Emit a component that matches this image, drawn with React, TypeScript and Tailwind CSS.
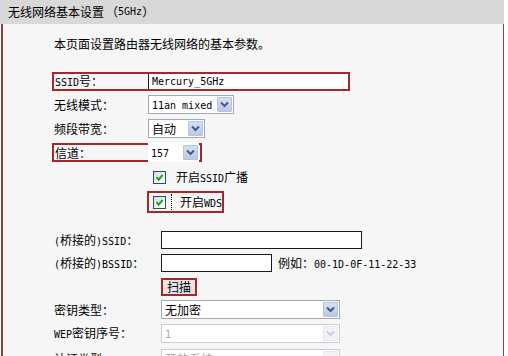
import React from "react";

const M = ({ children }: { children: React.ReactNode }) => (
  <span className="[font-family:'DejaVu_Sans_Mono',monospace] text-[10px]">{children}</span>
);

const Chevron = ({ disabled }: { disabled?: boolean }) => (
  <svg width="9" height="7" viewBox="0 0 9 7">
    <path
      d="M1 1.5 L4.5 5 L8 1.5"
      stroke={disabled ? "#c8cdd8" : "#4a5a7c"}
      strokeWidth="2"
      fill="none"
    />
  </svg>
);

const Select = ({
  className,
  children,
  disabled,
}: {
  className: string;
  children: React.ReactNode;
  disabled?: boolean;
}) => (
  <div
    className={
      "h-[19px] bg-white border flex items-center shrink-0 " +
      (disabled ? "border-[#cdcdcd] text-[#a8a8a8] " : "border-[#a3a9b3] text-black ") +
      className
    }
  >
    <div className="flex-1 pl-[3px] whitespace-nowrap leading-[15px]">{children}</div>
    <div
      className={
        "w-[15px] h-[15px] mr-[1px] flex items-center justify-center border rounded-[1px] shrink-0 " +
        (disabled
          ? "bg-[#f1f3f8] border-[#e2e6ee]"
          : "bg-linear-to-b from-[#d6e0f5] to-[#b9c8e6] border-[#b3c2de]")
      }
    >
      <Chevron disabled={disabled} />
    </div>
  </div>
);

const Check = () => (
  <div className="w-[13px] h-[13px] shrink-0 border border-[#2a4f6e] bg-linear-to-br from-[#dcdcd7] to-white flex items-center justify-center">
    <svg width="9" height="9" viewBox="0 0 9 9">
      <path d="M1.5 4.2 L3.6 6.6 L7.6 1.8" stroke="#22a022" strokeWidth="2" fill="none" />
    </svg>
  </div>
);

const RED = "border-[#a4282b]";

export default function App() {
  return (
    <div className="w-[508px] h-[356px] overflow-hidden bg-white text-[12px] leading-none text-black [font-family:'Noto_Sans_CJK_SC',sans-serif]">
      <div className="w-[504px] h-[24px] bg-[#d8d8d8] flex items-center pl-[8px] whitespace-nowrap">
        无线网络基本设置<span className="ml-[2px]">（</span>
        <M>5GHz</M>
        <span>）</span>
      </div>
      <div className="ml-[1px] w-[503px] h-[332px] bg-[#f6f6f6] border-l-2 border-r border-[#7b4a45] pl-[49px] flex flex-col *:shrink-0">
        <div className="mt-[10px] h-[20px] flex items-center pl-[2px]">本页面设置路由器无线网络的基本参数。</div>

        <div className={"mt-[18px] h-[19px] w-[298px] border-2 flex items-center " + RED}>
          <div className="w-[94px] pl-[1px]">
            <M>SSID</M>号：
          </div>
          <div className="flex-1 h-full bg-white border-l border-[#1a1a1a] pl-[3px] flex items-center">
            <M>Mercury_5GHz</M>
          </div>
        </div>

        <div className="mt-[4px] h-[19px] flex items-center pl-[2px]">
          <div className="w-[94px]">无线模式：</div>
          <Select className="w-[86px]">
            <M>11an mixed</M>
          </Select>
        </div>

        <div className="mt-[5px] h-[19px] flex items-center pl-[2px]">
          <div className="w-[94px]">频段带宽：</div>
          <Select className="w-[57px]">自动</Select>
        </div>

        <div className={"mt-[5px] h-[19px] w-[150px] border-2 flex items-center " + RED}>
          <div className="w-[94px] pl-[1px]">信道：</div>
          <Select className="w-[51px] h-[15px] border-0">
            <M>157</M>
          </Select>
        </div>

        <div className="mt-[6px] h-[18px] flex items-center pl-[101px]">
          <Check />
          <div className="ml-[10px]">
            开启<M>SSID</M>广播
          </div>
        </div>

        <div className={"mt-[5px] ml-[95px] h-[22px] w-[77px] border-2 flex items-center pl-[4px] " + RED}>
          <Check />
          <div className="ml-[5px] h-[16px] border-l border-dotted border-black" />
          <div className="ml-[8px] whitespace-nowrap">
            开启<M>WDS</M>
          </div>
        </div>

        <div className="mt-[18px] h-[18px] flex items-center pl-[2px]">
          <div className="w-[107px]">
            <M>(</M>桥接的<M>)SSID</M>：
          </div>
          <div className="w-[201px] h-[18px] bg-white border border-[#1b1b1b]" />
        </div>

        <div className="mt-[5px] h-[18px] flex items-center pl-[2px]">
          <div className="w-[107px]">
            <M>(</M>桥接的<M>)BSSID</M>：
          </div>
          <div className="w-[111px] h-[18px] bg-white border border-[#1b1b1b]" />
          <div className="ml-[6px] whitespace-nowrap">
            例如：<M>00-1D-0F-11-22-33</M>
          </div>
        </div>

        <div className={"mt-[6px] ml-[109px] h-[18px] w-[36px] border-2 flex items-center " + RED}>
          <div className="w-full h-full bg-[#e9e5e6] flex items-center justify-center leading-[14px]">扫描</div>
        </div>

        <div className="mt-[4px] h-[19px] flex items-center pl-[2px]">
          <div className="w-[107px]">密钥类型：</div>
          <Select className="w-[179px]">无加密</Select>
        </div>

        <div className="mt-[5px] h-[19px] flex items-center pl-[2px]">
          <div className="w-[107px]">
            <M>WEP</M>密钥序号：
          </div>
          <Select className="w-[179px]" disabled>
            <M>1</M>
          </Select>
        </div>

        <div className="mt-[6px] h-[19px] flex items-center pl-[2px]">
          <div className="w-[107px]">认证类型：</div>
          <Select className="w-[179px]" disabled>
            开放系统
          </Select>
        </div>
      </div>
    </div>
  );
}
